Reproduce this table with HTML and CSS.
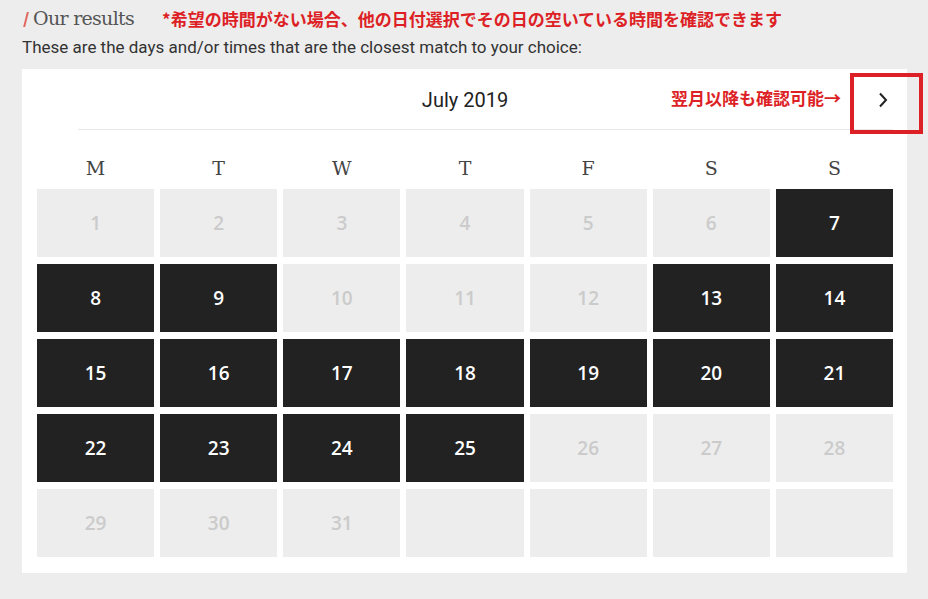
FILE: index.html
```html
<!DOCTYPE html>
<html lang="en">
<head>
<meta charset="utf-8">
<title>Our results</title>
<link rel="stylesheet" href="styles.css">
</head>
<body>
<div class="page">
  <div class="title-row">
    <span class="slash"></span>
    <h2 class="title">Our results</h2>
    <span class="note note-top">*希望の時間がない場合、他の日付選択でその日の空いている時間を確認できます</span>
  </div>
  <p class="subtitle">These are the days and/or times that are the closest match to your choice:</p>

  <div class="card">
    <div class="cal-head">
      <div class="head-side"></div>
      <div class="month">July 2019</div>
      <div class="head-side head-right">
        <span class="note note-next">翌月以降も確認可能→</span>
        <button class="next" aria-label="Next month">
          <svg width="12" height="16" viewBox="0 0 12 16"><path d="M3 1.5 L9 8 L3 14.5" fill="none" stroke="#222" stroke-width="2"/></svg>
        </button>
      </div>
      <div class="highlight"></div>
    </div>
    <div class="rule"></div>

    <div class="days">
      <span>M</span><span>T</span><span>W</span><span>T</span><span>F</span><span>S</span><span>S</span>
    </div>

    <div class="grid">
      <div class="cell off">1</div>
      <div class="cell off">2</div>
      <div class="cell off">3</div>
      <div class="cell off">4</div>
      <div class="cell off">5</div>
      <div class="cell off">6</div>
      <div class="cell on">7</div>

      <div class="cell on">8</div>
      <div class="cell on">9</div>
      <div class="cell off">10</div>
      <div class="cell off">11</div>
      <div class="cell off">12</div>
      <div class="cell on">13</div>
      <div class="cell on">14</div>

      <div class="cell on">15</div>
      <div class="cell on">16</div>
      <div class="cell on">17</div>
      <div class="cell on">18</div>
      <div class="cell on">19</div>
      <div class="cell on">20</div>
      <div class="cell on">21</div>

      <div class="cell on">22</div>
      <div class="cell on">23</div>
      <div class="cell on">24</div>
      <div class="cell on">25</div>
      <div class="cell off">26</div>
      <div class="cell off">27</div>
      <div class="cell off">28</div>

      <div class="cell off">29</div>
      <div class="cell off">30</div>
      <div class="cell off">31</div>
      <div class="cell off"></div>
      <div class="cell off"></div>
      <div class="cell off"></div>
      <div class="cell off"></div>
    </div>
  </div>
</div>
</body>
</html>
```

FILE: styles.css
```css
* { box-sizing: border-box; }

html, body {
  margin: 0;
  padding: 0;
  background: #ededed;
}

body {
  font-family: Roboto, "Liberation Sans", sans-serif;
  color: #333;
}

.page {
  padding: 4px 21px 0 22px;
}

.title-row {
  display: flex;
  align-items: center;
  height: 28px;
}

.slash {
  display: block;
  width: 2px;
  height: 15px;
  background: #e0665e;
  margin: 3px 6px 0 3px;
  transform: skewX(-14deg);
}

.title {
  margin: 0;
  font-family: "DejaVu Serif", "Liberation Serif", serif;
  font-weight: 200;
  font-size: 19px;
  color: #555;
  letter-spacing: -0.7px;
}

.note {
  font-family: "Noto Sans CJK JP", sans-serif;
  font-weight: 700;
  color: #dd1f26;
}

.note-top {
  font-size: 17px;
  margin-left: 28px;
  line-height: 1;
  margin-top: 1px;
}

.subtitle {
  margin: 5px 0 0;
  font-size: 17px;
  line-height: 20px;
  color: #333;
}

.card {
  position: relative;
  background: #fff;
  margin-top: 12px;
  padding: 0 14px 16px 15px;
}

.cal-head {
  display: grid;
  grid-template-columns: 1fr auto 1fr;
  align-items: center;
  height: 60px;
}

.month {
  font-size: 20px;
  color: #222;
  padding-top: 1px;
}

.head-right {
  display: flex;
  justify-content: flex-end;
  align-items: center;
}

.note-next {
  font-size: 17px;
  margin-right: 17px;
  margin-top: -3px;
}

.next {
  width: 50px;
  height: 50px;
  border: 0;
  background: transparent;
  display: flex;
  align-items: center;
  justify-content: center;
  padding: 0;
  margin-right: -15px;
  margin-top: 2px;
}

.highlight {
  position: absolute;
  left: 828px;
  top: 4px;
  width: 73px;
  height: 61px;
  border: 4px solid #dd1f26;
  pointer-events: none;
}

.rule {
  height: 1px;
  background: #e8e8e8;
  margin-left: 41px;
}

.days {
  display: grid;
  grid-template-columns: repeat(7, 1fr);
  column-gap: 6px;
  height: 59px;
  padding-top: 26px;
  font-family: "DejaVu Serif", "Liberation Serif", serif;
  font-weight: 200;
  font-size: 19px;
  color: #444;
  text-align: center;
  line-height: 24px;
}

.grid {
  display: grid;
  grid-template-columns: repeat(7, 1fr);
  grid-auto-rows: 68px;
  column-gap: 6px;
  row-gap: 7px;
}

.cell {
  display: flex;
  align-items: center;
  justify-content: center;
  font-family: "Open Sans", sans-serif;
  font-weight: 600;
  font-size: 19px;
}

.off {
  background: #ededed;
  color: #cbcbcb;
}

.on {
  background: #222;
  color: #fff;
}
```
